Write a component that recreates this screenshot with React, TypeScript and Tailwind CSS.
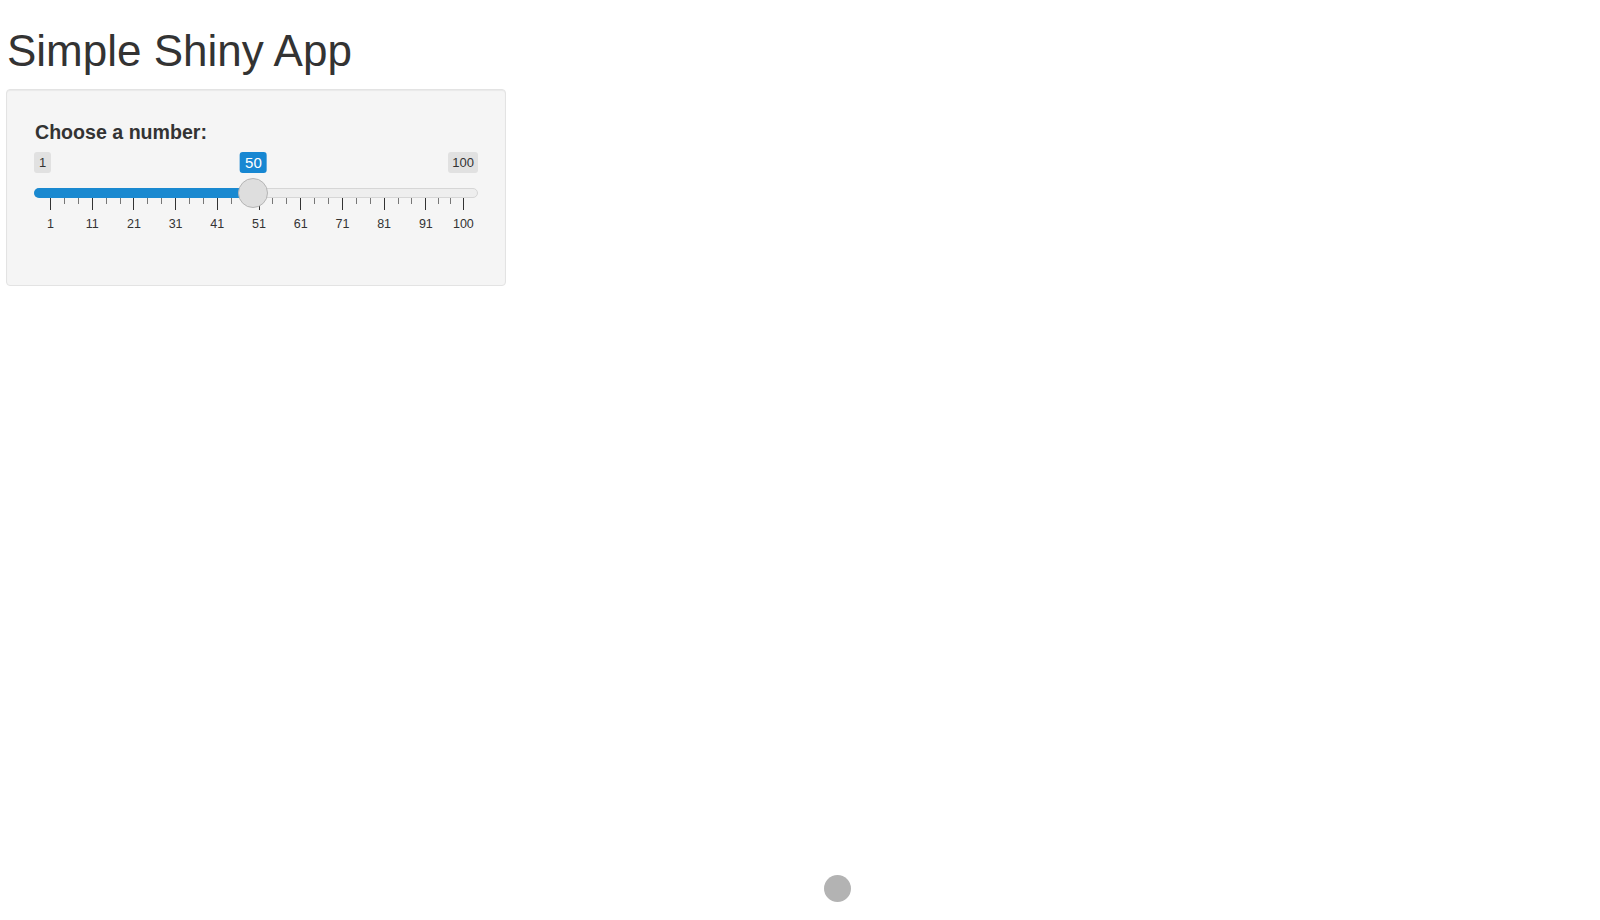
import React from 'react';

const MIN = 1;
const MAX = 100;
const VALUE = 50;

// the grid runs 413px across, inset 16px from the track ends
const UNIT = 413 / (MAX - MIN);

const majors = [1, 11, 21, 31, 41, 51, 61, 71, 81, 91, 100];
const segments = majors.slice(0, -1).map((v, i) => ({ from: v, units: majors[i + 1] - v }));

const TickLabel: React.FC<{ text: number }> = ({ text }) => (
    <div className="w-0 flex justify-center">
        <span className="whitespace-nowrap text-[12.5px] leading-[14px] text-[#333]">{text}</span>
    </div>
);

const Slider: React.FC = () => {
    const fill = 16 + (VALUE - MIN) * UNIT - 1;

    return (
        <div className="w-[444px]">
            <div className="flex justify-between text-[13px] leading-[21px] text-[#333]">
                <span className="px-[5px] rounded-[3px] bg-[#e1e1e1]">{MIN}</span>
                <span className="px-[4px] rounded-[3px] bg-[#e1e1e1]">{MAX}</span>
            </div>

            <div className="relative mt-[15px] h-[10px] rounded-full bg-[#eeeeee] border border-[#d6d6d6]">
                <div className="h-[10px] -m-px rounded-l-full bg-[#1a89d0]" style={{ width: fill }} />
                <div
                    className="absolute top-[-11px] w-[30px] h-[30px] -translate-x-1/2 rounded-full bg-[#dedede] border border-[#b5b5b5]"
                    style={{ left: fill - 1 }}
                />
                <span
                    className="absolute top-[-37px] px-[5px] h-[21px] -translate-x-1/2 rounded-[3px] bg-[#1787d2] text-[15px] leading-[21px] text-white"
                    style={{ left: fill - 1 }}
                >
                    {VALUE}
                </span>
            </div>

            <div className="flex pl-[16px]">
                {segments.map((s) => (
                    <div key={s.from} className="grid grid-cols-3 items-start" style={{ width: s.units * UNIT }}>
                        <div className="w-px h-[12px] bg-[#333]" />
                        <div className="w-px h-[6px] bg-[#777]" />
                        <div className="w-px h-[6px] bg-[#777]" />
                    </div>
                ))}
                <div className="w-px h-[12px] bg-[#333]" />
            </div>

            <div className="flex pl-[16.5px] mt-[7px]">
                {segments.map((s) => (
                    <div key={s.from} style={{ width: s.units * UNIT }}>
                        <TickLabel text={s.from} />
                    </div>
                ))}
                <TickLabel text={MAX} />
            </div>
        </div>
    );
};

const App: React.FC = () => {
    return (
        <div className="relative min-h-[920px] bg-white px-[6px] font-['Liberation_Sans',Arial,sans-serif] text-[#333]">
            <h2 className="pt-[27px] pl-px text-[44px] leading-[48px] font-normal">Simple Shiny App</h2>
            <div className="mt-[14px] w-[500px] rounded-[4px] border border-[#e3e3e3] bg-[#f5f5f5] pl-[27px] pt-[31px] pb-[53px] shadow-[inset_0_1px_1px_rgba(0,0,0,0.05)]">
                <label className="block text-[19.6px] leading-[22px] font-bold pl-px">Choose a number:</label>
                <div className="mt-[9px] h-[80px]">
                    <Slider />
                </div>
            </div>
            <div className="absolute left-[824px] top-[875px] w-[27px] h-[27px] rounded-full bg-[#b3b3b3]" />
        </div>
    );
};

export default App;
